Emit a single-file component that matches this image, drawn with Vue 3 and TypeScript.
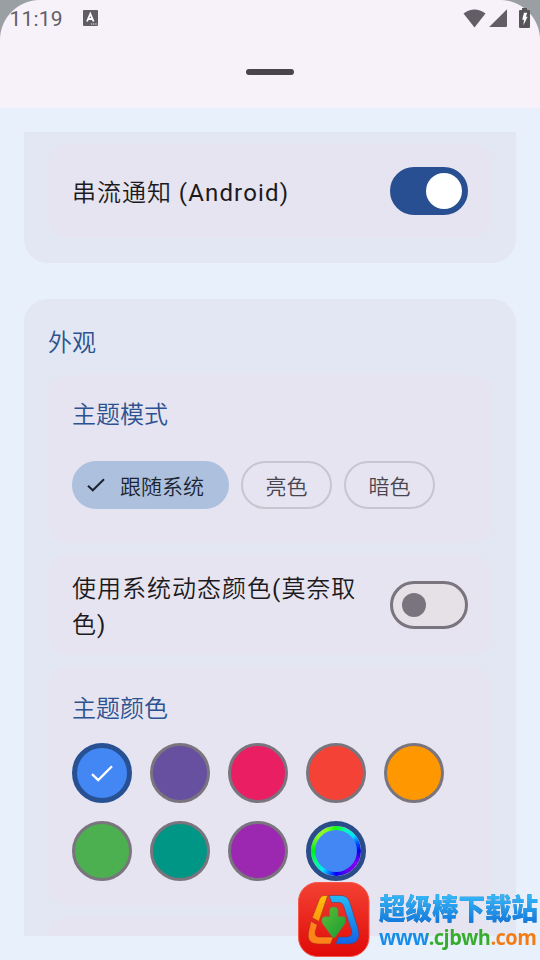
<script setup lang="ts">
import { ref } from 'vue'

interface Swatch {
  name: string
  color: string
}

const modes: string[] = ['跟随系统', '亮色', '暗色']
const selectedMode = ref(0)
const streamNotice = ref(true)
const dynamicColor = ref(false)

const swatches: Swatch[] = [
  { name: 'blue', color: '#4387f5' },
  { name: 'purple', color: '#6750a0' },
  { name: 'pink', color: '#e91e63' },
  { name: 'red', color: '#f44336' },
  { name: 'orange', color: '#ff9800' },
  { name: 'green', color: '#4caf50' },
  { name: 'teal', color: '#009685' },
  { name: 'violet', color: '#9c27b0' },
]
const selectedColor = ref('blue')
</script>

<template>
  <div class="screen">
    <header class="sheet-top">
      <div class="status">
        <span class="clock">11:19</span>
        <svg class="ime" viewBox="0 0 15 16">
          <rect width="15" height="16" rx="1" fill="#615d65" />
          <path d="M4 11.5 7.3 3.8 10.6 11.5M5.2 9H9.4" fill="none" stroke="#fff" stroke-width="1.8" />
          <path d="M8 14h1.2M10.2 14h1.2M12.4 14h1.2" stroke="#fff" stroke-width="1.2" />
        </svg>
        <div class="signals">
          <svg width="23" height="19" viewBox="0 0 23 19">
            <path d="M.5 4.6Q11.5-3.8 22.5 4.6L11.5 18.6Z" fill="#625e66" />
          </svg>
          <svg width="18" height="18" viewBox="0 0 18 18">
            <path d="M18 .2V17a1 1 0 0 1-1 1H.2Z" fill="#625e66" />
          </svg>
          <svg class="battery" width="11" height="20" viewBox="0 0 11 20">
            <path d="M3 0h5v2h2q1 0 1 1v16q0 1-1 1H1q-1 0-1-1V3q0-1 1-1h2Z" fill="#57545a" />
            <path d="M5 4.8H8.2L6.9 8.8H8.6L4.4 17.2 5 11.8H3.2Z" fill="#fff" />
          </svg>
        </div>
      </div>
      <div class="handle"></div>
    </header>

    <main class="content">
      <section class="group group-first">
        <div class="card row notice">
          <span class="label">串流通知 <span class="latin">(Android)</span></span>
          <button class="switch" :class="{ on: streamNotice }" @click="streamNotice = !streamNotice">
            <span class="thumb"></span>
          </button>
        </div>
      </section>

      <section class="group group-look">
        <h2 class="title">外观</h2>
        <div class="card mode-card">
          <h3 class="title">主题模式</h3>
          <div class="chips">
            <button
              v-for="(mode, i) in modes"
              :key="mode"
              class="chip"
              :class="{ selected: selectedMode === i }"
              @click="selectedMode = i"
            >
              <svg v-if="selectedMode === i" class="chip-check" viewBox="0 0 18 14">
                <path d="M1 7.7 5.8 12.3 17 1.2" fill="none" stroke="#1b2532" stroke-width="2" />
              </svg>
              <span>{{ mode }}</span>
            </button>
          </div>
        </div>

        <div class="card row dynamic">
          <span class="label">使用系统动态颜色<span class="latin">(</span>莫奈取色<span class="latin">)</span></span>
          <button class="switch" :class="{ on: dynamicColor }" @click="dynamicColor = !dynamicColor">
            <span class="thumb"></span>
          </button>
        </div>

        <div class="card color-card">
          <h3 class="title">主题颜色</h3>
          <div class="swatches">
            <button
              v-for="s in swatches"
              :key="s.name"
              class="swatch"
              :class="{ active: selectedColor === s.name }"
              :style="{ backgroundColor: s.color }"
              @click="selectedColor = s.name"
            >
              <svg v-if="selectedColor === s.name" class="swatch-check" viewBox="0 0 22 17">
                <path d="M1 9.2 7.2 15.1 21 1.2" fill="none" stroke="#fff" stroke-width="2.3" />
              </svg>
            </button>
            <button class="swatch custom"><span class="custom-core"></span></button>
          </div>
        </div>

        <div class="card next-card"></div>
      </section>
    </main>

    <aside class="site-badge">
      <svg class="site-logo" width="75" height="79" viewBox="0 0 75 79">
        <defs>
          <linearGradient id="tile" x1="0" y1="0" x2="0" y2="1">
            <stop offset="0" stop-color="#f34234" />
            <stop offset="1" stop-color="#e00a08" />
          </linearGradient>
          <linearGradient id="sky" x1="0" y1="0" x2="0" y2="1">
            <stop offset="0" stop-color="#22baf8" />
            <stop offset="1" stop-color="#1263e8" />
          </linearGradient>
          <linearGradient id="amber" x1="0" y1="0" x2="0" y2="1">
            <stop offset="0" stop-color="#ffc40b" />
            <stop offset="1" stop-color="#ff960e" />
          </linearGradient>
          <linearGradient id="leaf" x1="0" y1="0" x2="1" y2="1">
            <stop offset="0" stop-color="#62bd35" />
            <stop offset="1" stop-color="#129d36" />
          </linearGradient>
        </defs>
        <rect x="2.5" y="2.5" width="70.5" height="74" rx="19" fill="url(#tile)" stroke="#f4574b" />
        <path d="M31.7 15.5 23 41.5 16.2 37.8 23.3 19.5Q25 15.5 28 15.5Z" fill="url(#amber)" stroke="#ac2d13" stroke-width=".6" />
        <path d="M14.8 41.2 21.3 44.8 19.3 51.5Q18.5 57 23.5 57H37.3L34.5 64H22.5Q10.8 64 12.3 53Z" fill="#ff831b" stroke="#ac2d13" stroke-width=".6" />
        <path d="M33 15.5H45Q51.3 15.5 53.5 21.5L62.3 49.5Q65.5 64 52.5 64H39.7L42.3 57H50.5Q57 57 55.5 50.5L47.6 26Q46.5 22.5 43 22.5H35.7Z" fill="url(#sky)" stroke="#713550" stroke-width=".6" />
        <path d="M33.3 30.5Q33.3 26.7 37.8 26.7T42.3 30.5V36.3H46Q49.5 36.3 49.8 39.5 50 42 48.8 44L39.5 57Q37.8 59 36.2 57L26.6 44Q25.4 42 25.7 39.5 26 36.3 29.5 36.3H33.3Z" fill="url(#leaf)" stroke="#a4523c" stroke-width=".7" />
      </svg>
      <div class="site-text">
        <div class="site-name">超级棒下载站</div>
        <div class="site-url">www.cjbwh.com</div>
      </div>
    </aside>
  </div>
</template>

<style>
body {
  margin: 0;
  overflow: hidden;
}
</style>

<style scoped>
.screen {
  position: relative;
  width: 540px;
  height: 960px;
  overflow: hidden;
  background: #e8f0fc;
  font-family: Roboto, 'Noto Sans CJK SC', sans-serif;
  color: #1c1a20;
}
.screen * {
  box-sizing: border-box;
}
.sheet-top {
  height: 108px;
  background: radial-gradient(circle at 40px 40px, #f7f2fa 39.5px, #9a9fa4 40.5px) 0 0 / 40px 40px no-repeat,
    radial-gradient(circle at 0 40px, #f7f2fa 39.5px, #9a9fa4 40.5px) 100% 0 / 40px 40px no-repeat,
    #f7f2fa;
}
.status {
  display: flex;
  align-items: center;
  height: 36px;
  padding: 0 10px 0 9.5px;
}
.clock {
  width: 73px;
  padding-top: 1px;
  font-size: 21px;
  letter-spacing: 0.2px;
  color: #625e66;
}
.ime {
  width: 15px;
  height: 16px;
}
.signals {
  display: flex;
  align-items: center;
  margin-left: auto;
  gap: 3px;
}
.battery {
  margin-left: 9px;
}
.handle {
  width: 48px;
  height: 6px;
  margin: 33px auto 0;
  border-radius: 3px;
  background: #49454d;
}
.content {
  height: 828px;
  padding: 24px 24px 0;
  overflow: hidden;
}
.group {
  background: #e2e7f3;
}
.group-first {
  height: 131px;
  padding: 12px 24px 24px;
  border-radius: 0 0 24px 24px;
}
.group-look {
  display: flex;
  flex-direction: column;
  gap: 12px;
  height: 700px;
  margin-top: 36px;
  padding: 24px;
  border-radius: 24px 24px 0 0;
}
.card {
  flex-shrink: 0;
  padding: 0 24px;
  border-radius: 20px;
  background: #e6e4f0;
}
.row {
  display: flex;
  align-items: center;
  justify-content: space-between;
}
.notice {
  height: 94px;
}
.dynamic {
  height: 100px;
}
.label {
  width: 294px;
  padding-top: 4px;
  font-size: 24px;
  font-weight: 350;
  line-height: 36px;
  letter-spacing: 1px;
}
.latin {
  font-weight: 400;
  letter-spacing: 1.15px;
}
.title {
  margin: 0;
  font-size: 24px;
  font-weight: 350;
  line-height: 36px;
  color: #2c5290;
}
h2.title {
  height: 40px;
  line-height: 41px;
}
.mode-card {
  height: 168px;
  padding-top: 22px;
}
.chips {
  display: flex;
  gap: 12px;
  margin-top: 28px;
}
.chip {
  display: flex;
  align-items: center;
  justify-content: center;
  width: 91px;
  height: 48px;
  padding: 0;
  border: 2px solid #c9c5d0;
  border-radius: 24px;
  background: transparent;
  color: #49454f;
  font-family: inherit;
  font-size: 21px;
  font-weight: 350;
}
.chip.selected {
  width: 157px;
  justify-content: flex-start;
  gap: 15px;
  padding-left: 13px;
  border-color: #adc0de;
  background: #adc0de;
  color: #1b2532;
}
.chip-check {
  width: 18px;
  height: 14px;
}
.switch {
  display: flex;
  align-items: center;
  width: 78px;
  height: 48px;
  padding: 0 9px;
  border: 3px solid #79747e;
  border-radius: 24px;
  background: #e6e0e7;
}
.thumb {
  width: 24px;
  height: 24px;
  border-radius: 50%;
  background: #79747e;
}
.switch.on {
  justify-content: flex-end;
  padding: 0 3px;
  border-color: #284f91;
  background: #284f91;
}
.switch.on .thumb {
  width: 36px;
  height: 36px;
  background: #fff;
}
.color-card {
  height: 238px;
  padding-top: 24px;
}
.swatches {
  display: grid;
  grid-template-columns: repeat(5, 60px);
  gap: 18px;
  margin-top: 16px;
}
.swatch {
  display: flex;
  align-items: center;
  justify-content: center;
  width: 60px;
  height: 60px;
  padding: 0;
  border: 3px solid #79747e;
  border-radius: 50%;
}
.swatch.active {
  border: 5px solid #285193;
}
.swatch-check {
  width: 22px;
  height: 17px;
}
.custom {
  border: 5px solid #294d88;
  background: conic-gradient(
    #12ff12 0deg,
    #00ffbd 25deg,
    #00dfff 50deg,
    #0050ff 70deg,
    #0600e8 90deg,
    #8200f2 120deg,
    #6500ef 150deg,
    #0600ff 180deg,
    #00e5ff 215deg,
    #00ff85 240deg,
    #00ef18 270deg,
    #8cf72f 310deg,
    #86fa20 335deg,
    #12ff12 360deg
  );
  background-clip: padding-box;
}
.custom-core {
  width: 42px;
  height: 42px;
  border-radius: 50%;
  background: #4387f5;
}
.next-card {
  height: 120px;
}
.site-badge {
  position: absolute;
  right: 0;
  bottom: 1px;
  display: flex;
  gap: 8px;
  width: 244px;
  height: 79px;
}
.site-logo {
  flex-shrink: 0;
}
.site-text {
  display: flex;
  flex-direction: column;
  width: 161px;
  padding-top: 11px;
  white-space: nowrap;
}
.site-name {
  width: 160px;
  height: 34px;
  background: linear-gradient(#36b8f7 15%, #1278dc 90%);
  background-clip: text;
  color: transparent;
  filter: drop-shadow(0.5px 0.8px 0 #1764b0);
  font-family: 'Noto Sans CJK SC', sans-serif;
  font-size: 26.5px;
  font-weight: 900;
  line-height: 34px;
  transform: scaleY(1.1);
}
.site-url {
  width: 159px;
  height: 24px;
  background: linear-gradient(90deg, #188ce9 0 49px, #36ac2c 49px 110px, #f37b13 110px);
  background-clip: text;
  color: transparent;
  font-family: 'Open Sans', sans-serif;
  font-size: 20px;
  font-weight: 700;
  letter-spacing: -0.55px;
  line-height: 24px;
  transform: scaleY(1.1);
}
</style>
